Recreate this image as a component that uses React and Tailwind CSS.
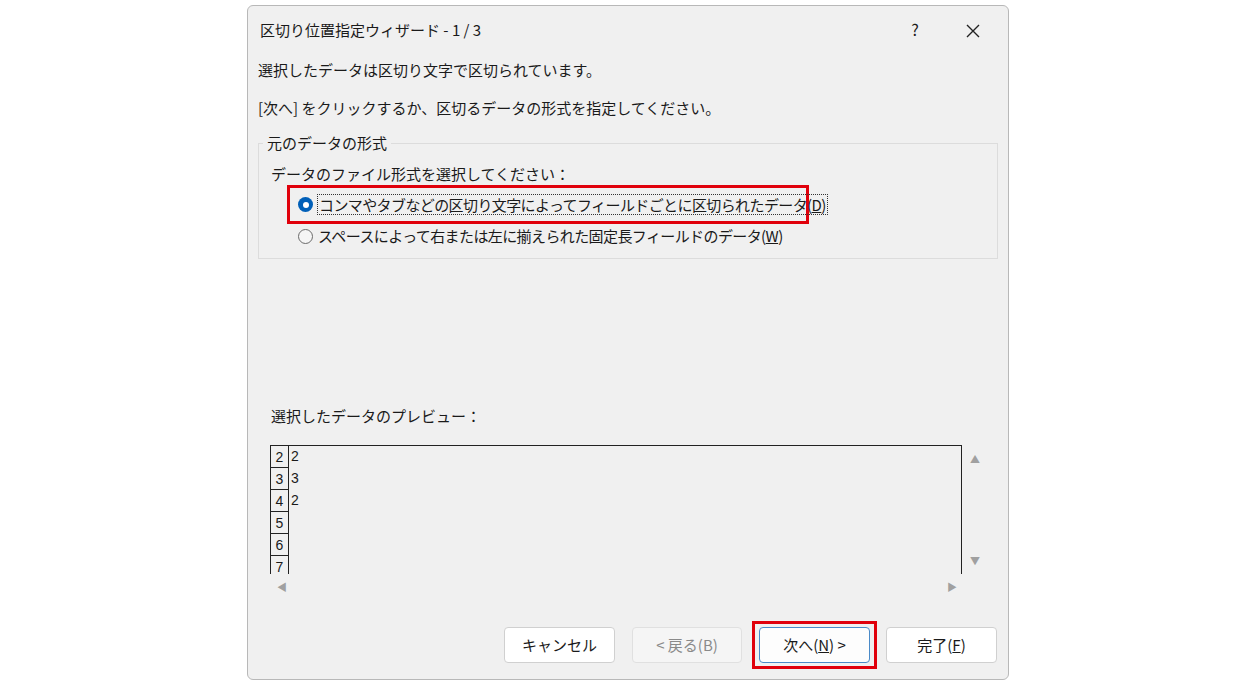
export default function App() {
  const f = { fontFamily: '"Noto Sans CJK JP","Liberation Sans",sans-serif' };
  return (
    <div className="w-[1256px] h-[687px] bg-white relative" style={f}>
      <div className="absolute left-[247px] top-[5px] w-[762px] h-[675px] bg-[#f0f0f0] border border-[#b8b8b8] rounded-[6px] text-[#1a1a1a] text-[15px] flex flex-col">
        <div className="h-[46px] flex items-center pl-[12px] text-[15px]">
          <span className="flex-1 pt-[2px]">区切り位置指定ウィザード - 1 / 3</span>
          <span className="w-[46px] text-center text-[16px]">?</span>
          <span className="w-[70px] text-center">
            <svg width="16" height="16" viewBox="0 0 16 16" className="inline"><path d="M2 2L14 14M14 2L2 14" stroke="#222" strokeWidth="1.4"/></svg>
          </span>
        </div>
        <div className="pl-[10px] mt-[8px] leading-[20px]">選択したデータは区切り文字で区切られています。</div>
        <div className="pl-[10px] mt-[18px] leading-[20px]">[次へ] をクリックするか、区切るデータの形式を指定してください。</div>
        <div className="mx-[10px] mt-[25px] h-[116px] border border-[#dcdcdc] relative">
          <span className="absolute -top-[11px] left-[4px] px-[4px] bg-[#f0f0f0] leading-[20px]">元のデータの形式</span>
          <div className="pl-[12px] pt-[20px] leading-[20px]">データのファイル形式を選択してください：</div>
          <div className="ml-[28px] mt-[1px] w-[522px] h-[39px] border-[3px] border-[#e0000b] flex items-center pl-[8px] whitespace-nowrap">
            <span className="w-[15px] h-[15px] shrink-0 rounded-full bg-[#005fb8] flex items-center justify-center mr-[4px]"><span className="w-[6px] h-[6px] rounded-full bg-white"></span></span>
            <span className="border border-dotted border-[#333] leading-[19px] px-[1px] tracking-[-0.6px]">コンマやタブなどの区切り文字によってフィールドごとに区切られたデータ(<u>D</u>)</span>
          </div>
          <div className="ml-[39px] mt-[2px] flex items-center whitespace-nowrap">
            <span className="w-[15px] h-[15px] shrink-0 rounded-full border border-[#6a6a6a] bg-[#f5f5f5] mr-[5px]"></span>
            <span className="leading-[20px] tracking-[-0.6px]">スペースによって右または左に揃えられた固定長フィールドのデータ(<u>W</u>)</span>
          </div>
        </div>
        <div className="pl-[23px] mt-[147px] leading-[20px]">選択したデータのプレビュー：</div>
        <div className="flex mt-[19px] ml-[22px]">
          <div className="w-[692px] h-[129px] border-t border-l border-r border-[#222] overflow-hidden bg-[#f0f0f0] text-[14px]" style={{ fontFamily: '"Liberation Sans",sans-serif' }}>
            {[["2","2"],["3","3"],["4","2"],["5",""],["6",""],["7",""]].map(([n, v]) => (
              <div key={n} className="flex h-[22px] leading-[20px]">
                <span className="w-[18px] border-r border-b border-[#222] text-center pt-[1px]">{n}</span>
                <span className="pl-[2px]">{v}</span>
              </div>
            ))}
          </div>
          <div className="flex flex-col justify-between h-[129px] ml-[8px] py-[6px] text-[#a0a0a0] text-[10px]">
            <span>▲</span><span>▼</span>
          </div>
        </div>
        <div className="flex justify-between ml-[29px] w-[680px] text-[#a0a0a0] text-[10px] mt-[5px]">
          <span>◀</span><span>▶</span>
        </div>
        <div className="flex justify-end items-center mr-[11px] mt-[27px]">
          <button className="w-[111px] h-[36px] bg-white border border-[#d0d0d0] rounded-[4px]">キャンセル</button>
          <button className="w-[110px] h-[36px] bg-[#f5f5f5] border border-[#e0e0e0] rounded-[4px] text-[#8a8a8a] ml-[17px]">&lt; 戻る(B)</button>
          <div className="border-[3px] border-[#e0000b] px-[4px] py-[3px] ml-[10px]">
            <button className="w-[111px] h-[36px] bg-[#fdfdfd] border border-[#4a8ac8] rounded-[4px]">次へ(<u>N</u>) &gt;</button>
          </div>
          <button className="w-[111px] h-[36px] bg-white border border-[#d0d0d0] rounded-[4px] ml-[9px]">完了(<u>F</u>)</button>
        </div>
      </div>
    </div>
  );
}
